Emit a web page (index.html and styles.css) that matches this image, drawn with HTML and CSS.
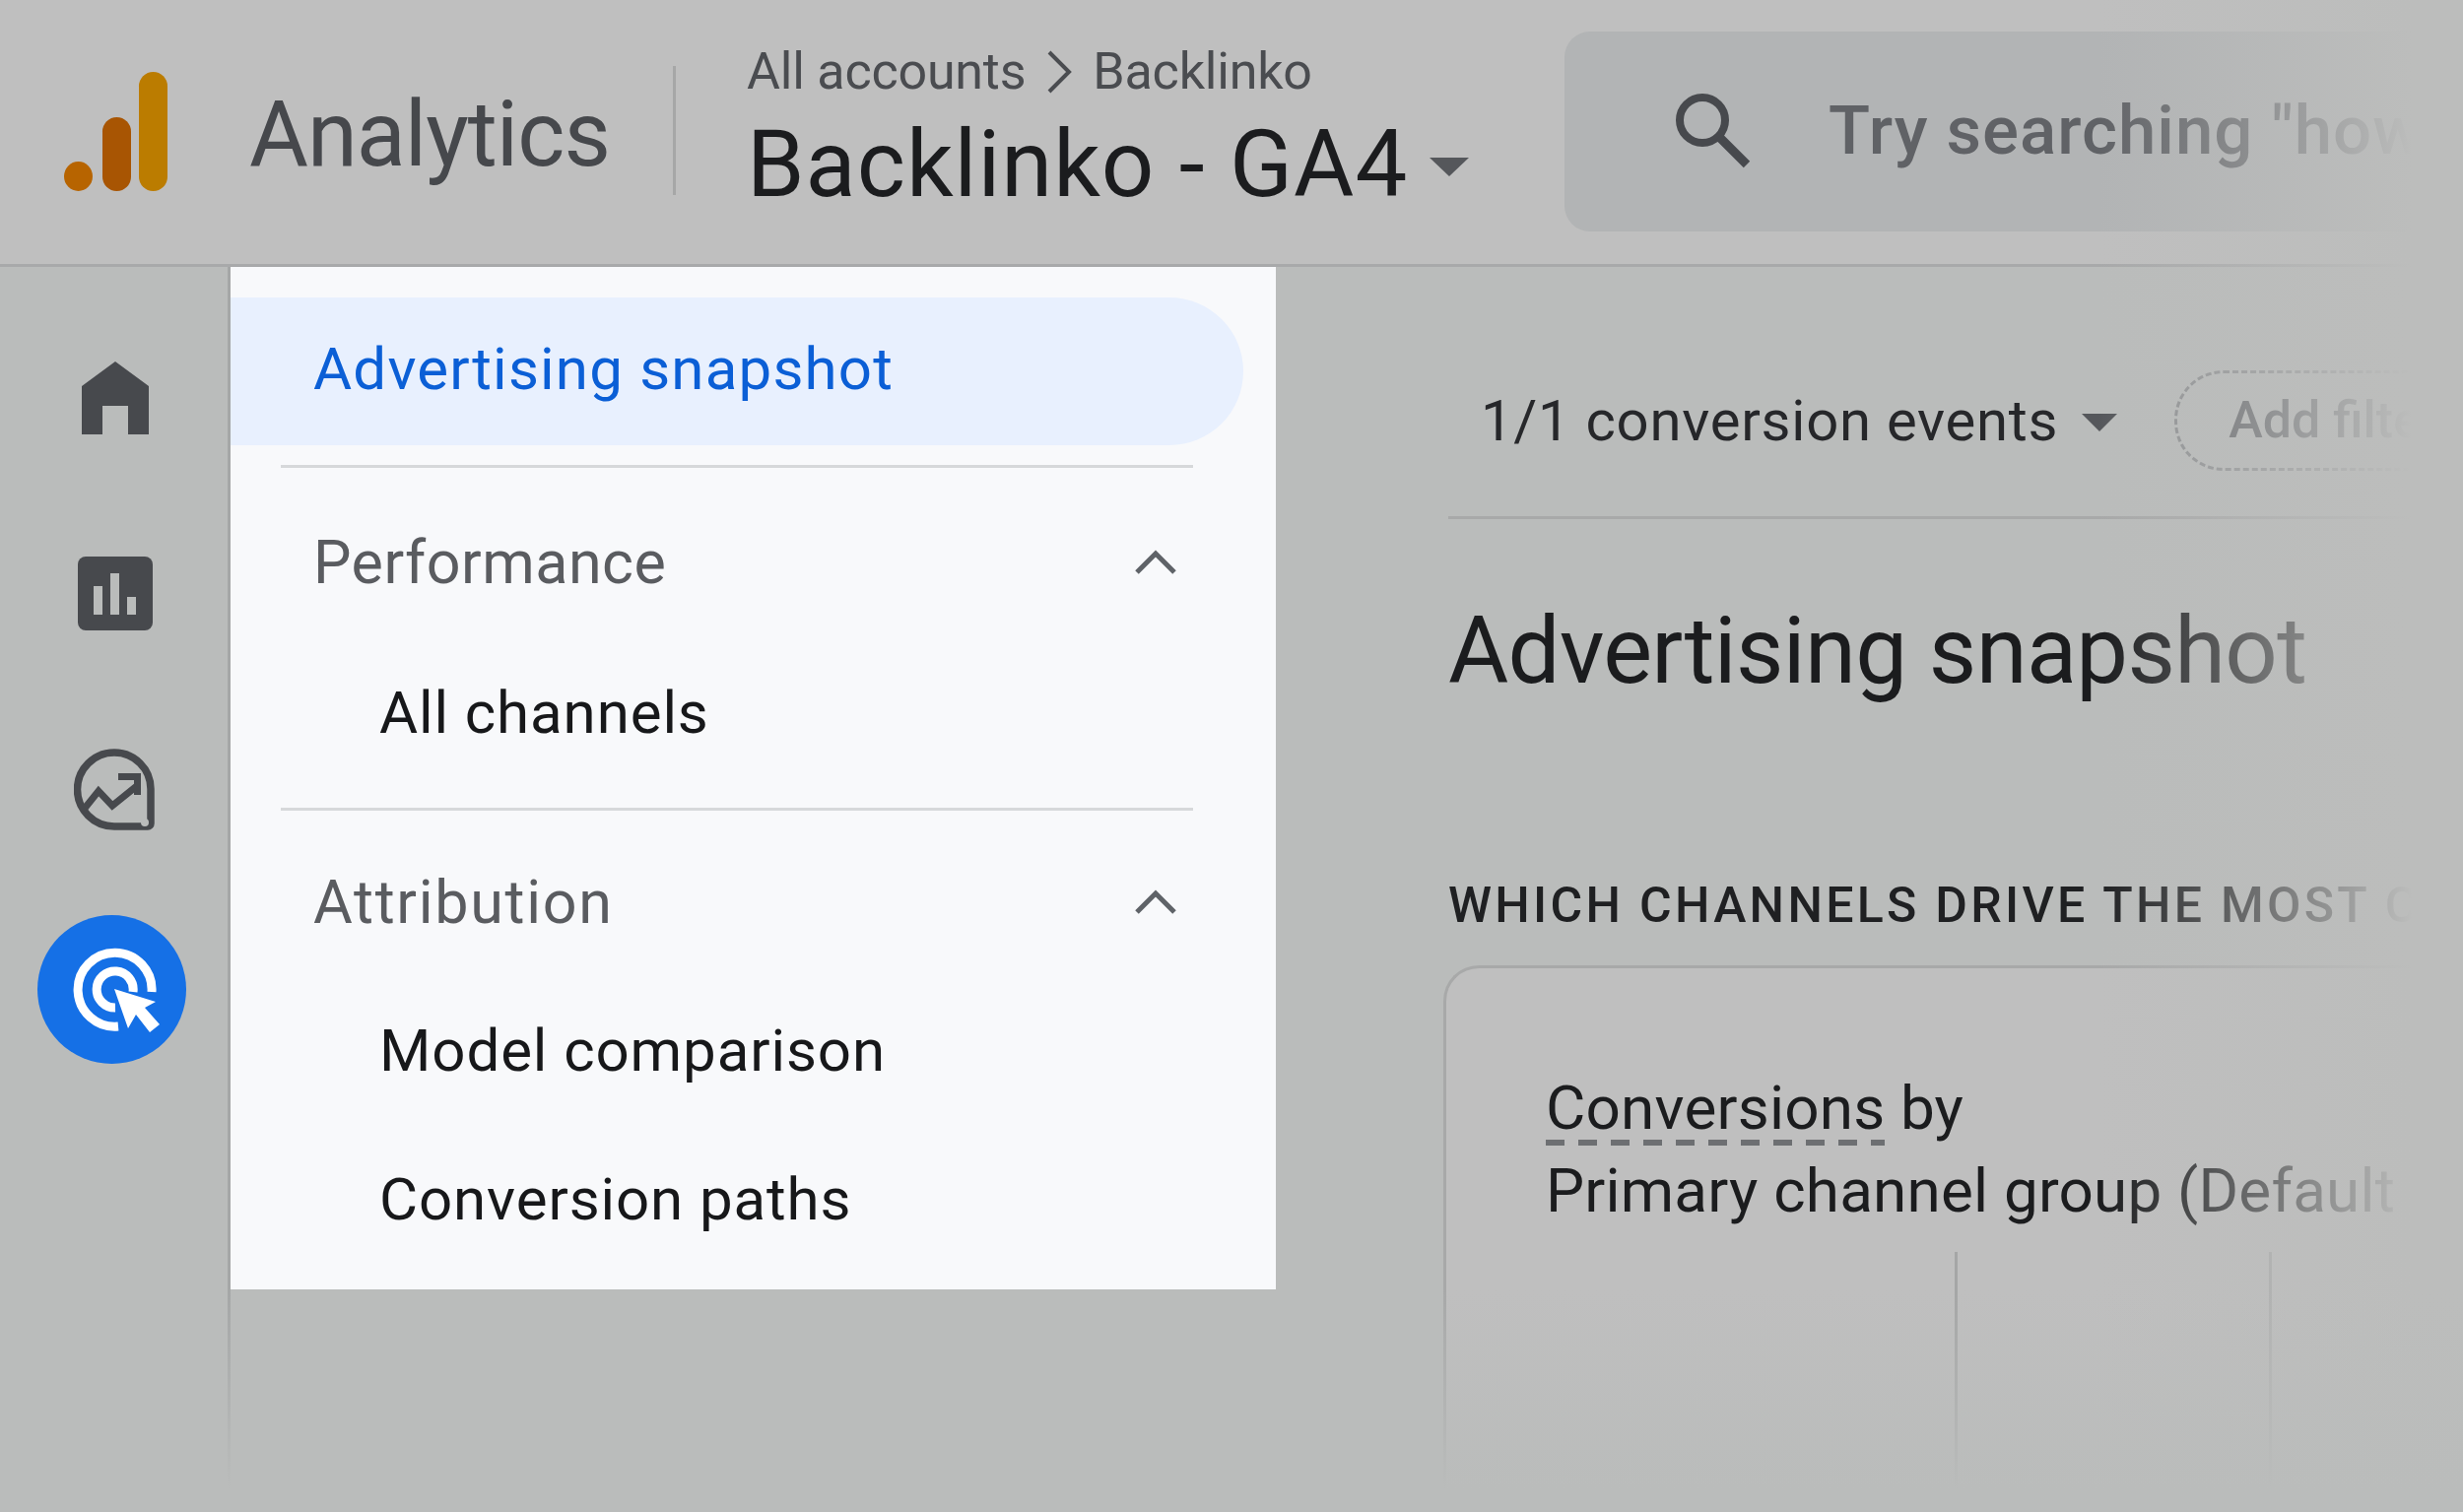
FILE: index.html
```html
<!DOCTYPE html>
<html lang="en">
<head>
    <meta charset="UTF-8">
    <title>Analytics - Advertising snapshot</title>
    <link rel="stylesheet" href="styles.css">
</head>
<body>
    <div class="page">
        <header class="topbar">
            <svg class="logo" width="106" height="121" viewBox="0 0 106 121">
                <ellipse cx="14.500" cy="106" rx="14.500" ry="15" fill="#b76400"/>
                <rect x="39" y="46" width="29" height="75" rx="14.500" fill="#a85503"/>
                <rect x="76" y="0" width="29" height="121" rx="14.500" fill="#bb7c00"/>
            </svg>
            <div class="brand">Analytics</div>
            <div class="account">
                <div class="crumbs">
                    <span>All accounts</span>
                    <svg width="30" height="46" viewBox="0 0 30 46"><path d="M5 3l20 20L5 43" fill="none" stroke="#4a4c50" stroke-width="4"/></svg>
                    <span>Backlinko</span>
                </div>
                <div class="property">
                    <span>Backlinko - GA4</span>
                    <i class="caret caret-big"></i>
                </div>
            </div>
            <div class="search">
                <svg width="78" height="76" viewBox="0 0 78 76"><circle cx="28" cy="27" r="23" fill="none" stroke="#47494d" stroke-width="8"/><path d="M45 44l28 28" stroke="#47494d" stroke-width="9"/></svg>
                <span>Try searching "how</span>
            </div>
        </header>

        <div class="main">
            <nav class="rail">
                <div class="rail-item">
                    <svg width="68" height="74" viewBox="0 0 68 74"><path d="M34 0L68 25V74H47V45H21V74H0V25Z" fill="#47494d"/></svg>
                </div>
                <div class="rail-item">
                    <svg width="76" height="75" viewBox="0 0 76 75"><rect width="76" height="75" rx="8" fill="#47494d"/><path d="M16 30h9v29h-9zM33 17h9v42h-9zM50 41h9v18h-9z" fill="#babcbb"/></svg>
                </div>
                <div class="rail-item">
                    <svg width="84" height="84" viewBox="0 0 84 84">
                        <path d="M41 4a37 37 0 0 1 37 37v35a3 3 0 0 1-3 3H41a37.500 37.500 0 0 1 0-75z" fill="none" stroke="#47494d" stroke-width="7.500"/>
                        <path d="M9 63l16-20 14 15 26-21" fill="none" stroke="#47494d" stroke-width="7"/>
                        <path d="M45 25h23v22h-7V32H45z" fill="#47494d"/>
                        <ellipse cx="72" cy="75" rx="4" ry="4" fill="#babcbb"/>
                    </svg>
                </div>
                <div class="rail-item rail-active">
                    <svg width="151" height="151" viewBox="0 0 151 151">
                        <circle cx="75.500" cy="75.500" r="75.500" fill="#1570e6"/>
                        <path d="M116 78A37.500 37.500 0 1 0 82 113M97 78A18.500 18.500 0 1 0 79 94" fill="none" stroke="#fff" stroke-width="9"/>
                        <path d="M78 75l42 13-11 6 15 17-10 8-14-18-8 14z" fill="#fff"/>
                    </svg>
                </div>
            </nav>

            <aside class="menu">
                <div class="menu-active">Advertising snapshot</div>
                <div class="menu-rule"></div>
                <div class="menu-head">
                    <span>Performance</span>
                    <svg width="44" height="26" viewBox="0 0 44 26"><path d="M3 23L22 4l19 19" fill="none" stroke="#5f6368" stroke-width="5"/></svg>
                </div>
                <div class="menu-link">All channels</div>
                <div class="menu-rule menu-rule-low"></div>
                <div class="menu-head menu-head-low">
                    <span>Attribution</span>
                    <svg width="44" height="26" viewBox="0 0 44 26"><path d="M3 23L22 4l19 19" fill="none" stroke="#5f6368" stroke-width="5"/></svg>
                </div>
                <div class="menu-link">Model comparison</div>
                <div class="menu-link">Conversion paths</div>
            </aside>

            <main class="content">
                <div class="filters">
                    <span class="events">1/1 conversion events</span>
                    <i class="caret"></i>
                    <span class="chip">Add filter</span>
                </div>
                <h1>Advertising snapshot</h1>
                <h2>WHICH CHANNELS DRIVE THE MOST C</h2>
                <section class="card">
                    <div class="card-title">
                        <span class="dashed">Conversions</span> by<br>
                        Primary channel group (Default
                    </div>
                    <div class="card-chart">
                        <i></i>
                        <i></i>
                    </div>
                </section>
            </main>
        </div>

        <div class="fade-right"></div>
        <div class="fade-bottom"></div>
    </div>
</body>
</html>
```

FILE: styles.css
```css
* {
    box-sizing: border-box;
}

body {
    margin: 0;
    background: #babcbb;
    font-family: Roboto, 'Noto Sans', sans-serif;
    color: #1b1c1e;
}

.page {
    position: relative;
    width: 2500px;
    height: 1535px;
    overflow: hidden;
}

/* top bar */
.topbar {
    display: flex;
    align-items: flex-start;
    height: 271px;
    background: #bfbfbf;
    border-bottom: 3px solid #a8a9aa;
}

.logo {
    margin: 73px 0 0 65px;
}

.brand {
    width: 433px;
    height: 131px;
    margin: 67px 0 0 82px;
    padding-top: 15px;
    border-right: 3px solid #a6a7a7;
    font-size: 92px;
    letter-spacing: -1px;
    line-height: 110px;
    color: #46484c;
}

.account {
    width: 829px;
    margin-left: 72px;
}

.crumbs {
    display: flex;
    align-items: center;
    gap: 19px;
    margin-top: 43px;
    font-size: 52px;
    letter-spacing: -0.2px;
    line-height: 60px;
    color: #4a4c50;
}

.property {
    display: flex;
    align-items: center;
    gap: 22px;
    margin-top: 10px;
    font-size: 94px;
    letter-spacing: 1px;
    line-height: 108px;
    color: #1b1c1e;
}

.caret {
    display: inline-block;
    width: 0;
    height: 0;
    border-left: 18px solid transparent;
    border-right: 18px solid transparent;
    border-top: 18px solid #55575b;
}

.caret-big {
    border-left-width: 20px;
    border-right-width: 20px;
    border-top-width: 19px;
    margin-top: 4px;
}

.search {
    display: flex;
    align-items: center;
    gap: 78px;
    width: 911px;
    height: 203px;
    margin: 32px 0 0 1px;
    padding: 0 0 2px 112px;
    background: #b2b4b5;
    border-radius: 26px;
    font-size: 69px;
    font-weight: 500;
    letter-spacing: 1px;
    white-space: nowrap;
    color: #606266;
}

.search svg {
    flex: none;
}

/* main area */
.main {
    display: flex;
    height: 1264px;
}

.rail {
    flex: none;
    width: 234px;
    padding-top: 33px;
    border-right: 3px solid #a5a7a7;
}

.rail-item {
    display: flex;
    justify-content: center;
    align-items: center;
    width: 233px;
    height: 199px;
}

.rail-item svg {
    display: block;
}

.rail-active {
    height: 151px;
    margin-top: 28px;
    padding-right: 6px;
}

/* open menu */
.menu {
    flex: none;
    width: 1061px;
    height: 1038px;
    padding-top: 31px;
    background: #f8f9fb;
}

.menu-active {
    width: 1028px;
    height: 150px;
    padding-left: 84px;
    background: #e8f0fe;
    border-radius: 0 75px 75px 0;
    font-size: 60px;
    font-weight: 450;
    letter-spacing: 1.2px;
    line-height: 146px;
    color: #0b5fd6;
}

.menu-rule {
    width: 926px;
    height: 3px;
    margin: 20px 0 0 51px;
    background: #d6d8da;
}

.menu-rule-low {
    margin-top: 21px;
}

.menu-head {
    display: flex;
    justify-content: space-between;
    align-items: center;
    width: 961px;
    height: 173px;
    padding: 19px 0 0 84px;
    font-size: 61px;
    font-weight: 450;
    letter-spacing: 0.5px;
    color: #5a5c60;
}

.menu-head-low {
    height: 168px;
    padding-top: 18px;
    letter-spacing: 1.7px;
}

.menu-link {
    height: 151px;
    padding-left: 151px;
    font-size: 60px;
    font-weight: 450;
    letter-spacing: 0.9px;
    line-height: 151px;
    color: #17181a;
}

/* page content */
.content {
    flex: 1;
    min-width: 0;
    padding: 104px 0 0 175px;
    white-space: nowrap;
}

.filters {
    display: flex;
    align-items: center;
    height: 152px;
    padding: 0 0 46px 33px;
    border-bottom: 3px solid #a8a9a9;
    font-size: 58px;
    font-weight: 450;
    letter-spacing: 0.75px;
}

.events {
    color: #26272a;
}

.filters .caret {
    margin: 4px 0 0 24px;
}

.chip {
    flex: 1;
    height: 102px;
    margin-left: 58px;
    padding-left: 52px;
    border: 3px dashed #8d8f91;
    border-right: 0;
    border-radius: 50px 0 0 50px;
    font-size: 52px;
    font-weight: 500;
    letter-spacing: 0;
    line-height: 96px;
    color: #5f6165;
}

h1 {
    margin: 79px 0 0;
    font-size: 94px;
    font-weight: 400;
    letter-spacing: -0.7px;
    line-height: 110px;
    color: #1b1c1e;
}

h2 {
    margin: 173px 0 0;
    font-size: 50px;
    font-weight: 500;
    line-height: 60px;
    letter-spacing: 3.3px;
    color: #1f2022;
}

.card {
    height: 555px;
    margin: 31px 0 0 -5px;
    padding: 100px 0 0 101px;
    background: #bfbfbf;
    border: 3px solid #a8a9a9;
    border-right: 0;
    border-bottom: 0;
    border-radius: 36px 0 0 0;
}

.card-title {
    font-size: 62px;
    font-weight: 450;
    letter-spacing: 0.2px;
    line-height: 84px;
    color: #1b1c1e;
}

.dashed {
    padding-bottom: 2px;
    background: repeating-linear-gradient(to right, #6d6f72 0 19px, transparent 19px 33px) bottom / 100% 6px no-repeat;
}

.card-chart {
    display: flex;
    gap: 316px;
    height: 250px;
    margin: 20px 0 0 415px;
}

.card-chart i {
    width: 3px;
    background: #a5a6a6;
}

/* the picture fades out towards its edges */
.fade-right {
    position: absolute;
    top: 0;
    right: 0;
    width: 370px;
    height: 100%;
    background: linear-gradient(to right, rgba(188, 189, 188, 0), #bcbdbc 86%);
}

.fade-bottom {
    position: absolute;
    left: 0;
    right: 0;
    bottom: 0;
    height: 226px;
    background: linear-gradient(to bottom, rgba(186, 188, 187, 0), #babcbb 90%);
}
```
